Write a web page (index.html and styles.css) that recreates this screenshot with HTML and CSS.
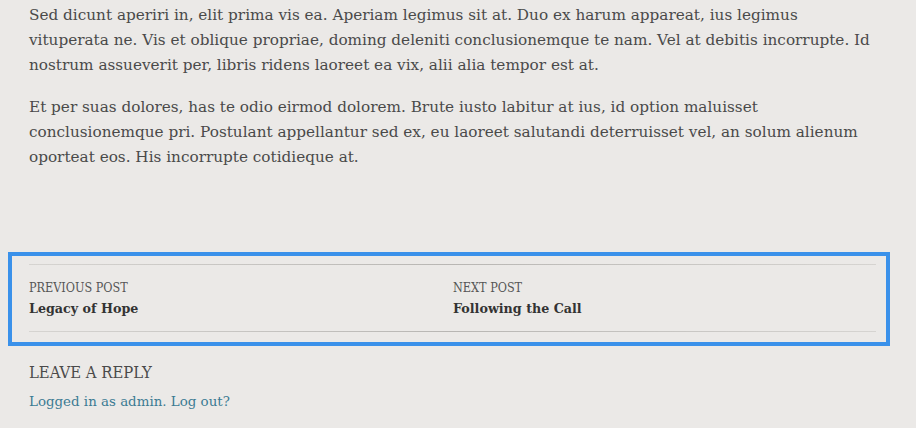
FILE: index.html
```html
<!DOCTYPE html>
<html lang="en">
<head>
<meta charset="utf-8">
<title>Post</title>
<link rel="stylesheet" href="styles.css">
</head>
<body>
<main class="page">
  <div class="entry-content">
    <p>Sed dicunt aperiri in, elit prima vis ea. Aperiam legimus sit at. Duo ex harum appareat, ius legimus vituperata ne. Vis et oblique propriae, doming deleniti conclusionemque te nam. Vel at debitis incorrupte. Id nostrum assueverit per, libris ridens laoreet ea vix, alii alia tempor est at.</p>
    <p>Et per suas dolores, has te odio eirmod dolorem. Brute iusto labitur at ius, id option maluisset conclusionemque pri. Postulant appellantur sed ex, eu laoreet salutandi deterruisset vel, an solum alienum oporteat eos. His incorrupte cotidieque at.</p>
  </div>

  <nav class="post-nav">
    <div class="post-nav-inner">
      <a class="nav-item" href="#">
        <span class="nav-label">Previous Post</span>
        <span class="nav-title">Legacy of Hope</span>
      </a>
      <a class="nav-item" href="#">
        <span class="nav-label">Next Post</span>
        <span class="nav-title">Following the Call</span>
      </a>
    </div>
  </nav>

  <section class="reply">
    <h3 class="reply-title">Leave a Reply</h3>
    <p class="logged-in"><a href="#">Logged in as admin</a>. <a href="#">Log out?</a></p>
  </section>
</main>
</body>
</html>
```
FILE: styles.css
```css
html, body {
  margin: 0;
  padding: 0;
  background: #ebe9e7;
}

body {
  font-family: "DejaVu Serif", "Liberation Serif", serif;
  color: #4a4a4a;
}

.page {
  display: flex;
  flex-direction: column;
  padding-top: 3px;
}

.entry-content {
  padding: 0 0 0 29px;
  width: 849px;
}

.entry-content p {
  margin: 0 0 17px;
  font-size: 15.25px;
  line-height: 25px;
}

.post-nav {
  margin: 65px 0 0 8px;
  width: 847px;
  border: 4px solid #3a91ea;
  padding: 8px 10px 10px 17px;
}

.post-nav-inner {
  border-style: solid;
  border-width: 1px 0;
  border-image: linear-gradient(to right, #d6d4d1, #b8b6b3 50%, #d6d4d1) 1;
  display: grid;
  grid-template-columns: 424px 1fr;
  padding: 13px 0 11px;
}

.nav-item {
  display: flex;
  flex-direction: column;
  text-decoration: none;
  color: #333;
}

.nav-label {
  font-family: "DejaVu Serif Condensed", "DejaVu Serif", serif;
  font-stretch: condensed;
  font-size: 12.5px;
  line-height: 20px;
  text-transform: uppercase;
  color: #555;
}

.nav-title {
  font-size: 12.7px;
  line-height: 22px;
  font-weight: bold;
  color: #333;
}

.reply {
  padding-left: 29px;
  padding-top: 14px;
}

.reply-title {
  margin: 0;
  font-family: "DejaVu Serif Condensed", "DejaVu Serif", serif;
  font-stretch: condensed;
  font-size: 16.5px;
  line-height: 26px;
  font-weight: normal;
  text-transform: uppercase;
  color: #4a4a4a;
}

.logged-in {
  margin: 3px 0 0;
  font-size: 13.4px;
  line-height: 25px;
  color: #3b7b93;
}

.logged-in a {
  color: #3b7b93;
  text-decoration: none;
}
```
